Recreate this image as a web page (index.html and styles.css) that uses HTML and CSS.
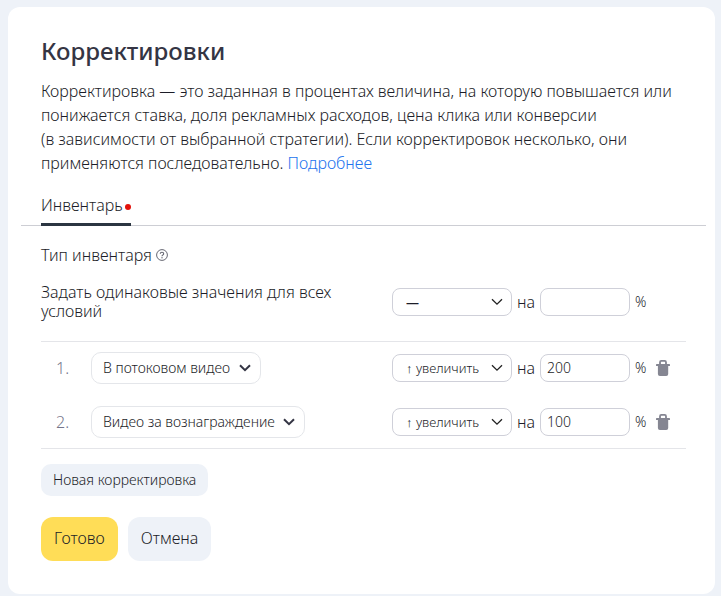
FILE: index.html
```
<!DOCTYPE html>
<html lang="ru">
<head>
    <meta charset="UTF-8">
    <meta name="viewport" content="width=device-width, initial-scale=1.0">
    <title>Корректировки</title>
    <link rel="stylesheet" href="styles.css">
</head>
<body>
    <svg class="sprite" aria-hidden="true">
        <symbol id="chevron" viewBox="0 0 12 8">
            <path d="M1 1.2 6 6.2 11 1.2" fill="none" stroke="currentColor"/>
        </symbol>
        <symbol id="trash" viewBox="0 0 14 16">
            <path d="M4 3.2V2.2Q4 .9 5.3 .9H8.7Q10 .9 10 2.2V3.2" fill="none" stroke="currentColor" stroke-width="1.8"/>
            <path d="M.7 4.1H13.3Q14 4.1 14 4.8V5.4Q14 6 13.3 6H12.2V14Q12.2 16 10.2 16H3.9Q1.9 16 1.9 14V6H.7Q0 6 0 5.4V4.8Q0 4.1 .7 4.1Z" fill="currentColor"/>
            <path d="M3.1 3H4.9V5H3.1ZM9.1 3H10.9V5H9.1Z" fill="currentColor"/>
        </symbol>
    </svg>
    <form class="card">
        <h1>Корректировки</h1>
        <p class="description">Корректировка — это заданная в процентах величина, на которую повышается или понижается ставка, доля рекламных расходов, цена клика или конверсии (в&nbsp;зависимости от выбранной стратегии). Если корректировок несколько, они применяются последовательно. <a href="#">Подробнее</a></p>

        <div class="tabs">
            <button type="button" class="tab">Инвентарь<span class="dot"></span></button>
        </div>

        <h2 class="subtitle">Тип инвентаря
            <svg class="help" viewBox="0 0 12 12" aria-hidden="true">
                <circle cx="6" cy="6" r="5.4" fill="none" stroke="currentColor"/>
                <path d="M4.3 4.8Q4.3 3.2 6 3.2T7.7 4.7Q7.7 5.4 6.8 5.9 6 6.3 6 7.2" fill="none" stroke="currentColor" stroke-width="1.1"/>
                <circle cx="6" cy="8.7" r=".7" fill="currentColor"/>
            </svg>
        </h2>

        <div class="row common">
            <label class="common-label" for="all-action">Задать одинаковые значения для всех условий</label>
            <div class="controls">
                <span class="select">
                    <select id="all-action" class="empty"><option>—</option></select>
                    <svg class="chevron"><use href="#chevron"/></svg>
                </span>
                <label for="all-value">на</label>
                <input id="all-value" type="text">
                <span>%</span>
            </div>
        </div>

        <div class="list">
            <div class="row">
                <div class="condition">
                    <label class="number" for="type-1">1.</label>
                    <span class="select pill">
                        <select id="type-1"><option>В потоковом видео</option></select>
                        <svg class="chevron"><use href="#chevron"/></svg>
                    </span>
                </div>
                <div class="controls">
                    <span class="select">
                        <select id="action-1" aria-label="Действие"><option>↑ увеличить</option></select>
                        <svg class="chevron"><use href="#chevron"/></svg>
                    </span>
                    <label for="value-1">на</label>
                    <input id="value-1" type="text" value="200">
                    <span>%</span>
                    <button type="button" class="remove" aria-label="Удалить"><svg><use href="#trash"/></svg></button>
                </div>
            </div>
            <div class="row">
                <div class="condition">
                    <label class="number" for="type-2">2.</label>
                    <span class="select pill">
                        <select id="type-2"><option>Видео за вознаграждение</option></select>
                        <svg class="chevron"><use href="#chevron"/></svg>
                    </span>
                </div>
                <div class="controls">
                    <span class="select">
                        <select id="action-2" aria-label="Действие"><option>↑ увеличить</option></select>
                        <svg class="chevron"><use href="#chevron"/></svg>
                    </span>
                    <label for="value-2">на</label>
                    <input id="value-2" type="text" value="100">
                    <span>%</span>
                    <button type="button" class="remove" aria-label="Удалить"><svg><use href="#trash"/></svg></button>
                </div>
            </div>
        </div>

        <button type="button" class="btn btn-small">Новая корректировка</button>
        <div class="actions">
            <button type="submit" class="btn btn-primary">Готово</button>
            <button type="button" class="btn">Отмена</button>
        </div>
    </form>
</body>
</html>
```
FILE: styles.css
```
* {
    box-sizing: border-box;
}
body {
    margin: 0;
    padding: 7px 6px 2px 8px;
    background: #eef2f8;
    color: #1c1d28;
    font: 300 16px/24px "Noto Sans", "Open Sans", sans-serif;
}
button,
input,
select {
    font: inherit;
    color: inherit;
}
button {
    border: none;
    padding: 0;
    background: none;
    cursor: pointer;
}
.sprite {
    display: none;
}
.card {
    padding: 28px 29px 33px 33px;
    background: #fff;
    border-radius: 12px;
}
h1 {
    margin: 0 0 12px;
    font-size: 24px;
    line-height: 32px;
    font-weight: 500;
    color: #343544;
}
.description {
    margin: 0;
}
.description a {
    color: #2374ee;
    text-decoration: none;
}

/* tabs */
.tabs {
    display: flex;
    margin: 18px -20px 0;
    padding: 0 20px;
    box-shadow: inset 0 -1px #cdced4;
}
.tab {
    display: flex;
    align-items: center;
    gap: 2px;
    padding-bottom: 6px;
    border-bottom: 3px solid #2b3541;
}
.dot {
    width: 6px;
    height: 6px;
    margin-top: 3px;
    border-radius: 50%;
    background: #e3120b;
}
.subtitle {
    display: flex;
    align-items: center;
    gap: 4px;
    margin: 17px 0 16px;
    font-size: 16px;
    font-weight: 300;
}
.help {
    width: 12px;
    height: 12px;
    color: #666772;
}

/* rows */
.row {
    display: grid;
    grid-template-columns: 1fr 294px;
    align-items: center;
}
.common {
    margin-bottom: 20px;
}
.common-label {
    max-width: 320px;
    line-height: 19px;
}
.controls {
    display: flex;
    align-items: center;
    gap: 5px;
}
.condition {
    display: flex;
    align-items: center;
}
.number {
    width: 50px;
    padding-left: 15px;
    color: #74758a;
}
.list {
    display: grid;
    gap: 22px;
    padding: 10px 0;
    border: solid #e4e5e9;
    border-width: 1px 0;
}
.select {
    display: grid;
    align-items: center;
    width: 120px;
}
.select select,
.select .chevron {
    grid-area: 1 / 1;
}
.select select {
    appearance: none;
    width: 100%;
    height: 28px;
    padding: 0 24px 1px 13px;
    border: 1px solid #cfd0d9;
    border-radius: 8px;
    background: #fff;
    font-size: 13px;
}
.select .empty {
    font-weight: 500;
}
.chevron {
    justify-self: end;
    width: 12px;
    height: 8px;
    margin-right: 9px;
    stroke-width: 1.3;
    color: #222;
    pointer-events: none;
}
.pill {
    width: auto;
}
.pill select {
    height: 32px;
    padding: 0 29px 0 11px;
    border-color: #e4e6ea;
    border-radius: 10px;
    font-size: 14px;
}
.pill .chevron {
    margin-right: 10px;
    stroke-width: 2;
    color: #343544;
}
.controls input {
    width: 90px;
    height: 28px;
    padding: 0 6px 2px;
    border: 1px solid #cfd0d9;
    border-radius: 8px;
    background: #fff;
    font-size: 14px;
}
.controls span:not(.select) {
    font-size: 14px;
}
.remove {
    margin-left: 5px;
}
.remove svg {
    display: block;
    width: 14px;
    height: 16px;
    color: #858692;
}

/* buttons */
.btn {
    height: 44px;
    padding: 0 13px 2px;
    border-radius: 12px;
    background: #eef2f8;
}
.btn-small {
    height: 32px;
    margin-top: 15px;
    padding: 0 12px;
    border-radius: 10px;
    font-size: 14px;
}
.btn-primary {
    background: #ffdd57;
}
.actions {
    display: flex;
    gap: 10px;
    margin-top: 21px;
}
```
